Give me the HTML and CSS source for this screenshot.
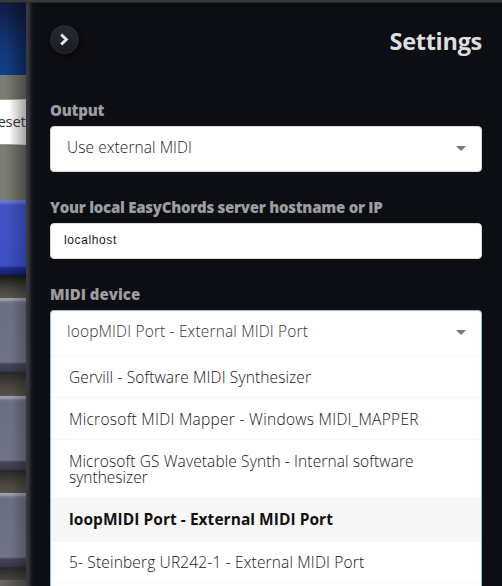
FILE: index.html
```
<!DOCTYPE html>
<html lang="en">
<head>
<meta charset="utf-8">
<title>Settings</title>
<link rel="stylesheet" href="styles.css">
</head>
<body>
<div class="topbar"></div>
<div class="shell">
  <aside class="board">
    <div class="banner"></div>
    <div class="preset"><span>eset</span></div>
    <div class="key active"></div>
    <div class="key"></div>
    <div class="key"></div>
    <div class="key last"></div>
    <div class="floor"></div>
  </aside>
  <main class="panel">
    <header class="head">
      <button class="close" aria-label="Close"><svg width="28" height="28" viewBox="0 0 28 28"><path d="M11.2 8.6 16.4 13.5 11.2 18.4" fill="none" stroke="#e6e6e8" stroke-width="2.9"/></svg></button>
      <h1>Settings</h1>
    </header>
    <label class="l-output">Output</label>
    <div class="select"><span class="t-use">Use external MIDI</span><i class="caret"></i></div>
    <label class="l-host">Your local EasyChords server hostname or IP</label>
    <div class="input">localhost</div>
    <label class="l-device">MIDI device</label>
    <div class="dropdown">
      <div class="current"><span class="t-cur">loopMIDI Port - External MIDI Port</span><i class="caret"></i></div>
      <div class="option"><span class="t-ger">Gervill - Software MIDI Synthesizer</span></div>
      <div class="option"><span class="t-map">Microsoft MIDI Mapper - Windows MIDI_MAPPER</span></div>
      <div class="option double"><span class="t-gs">Microsoft GS Wavetable Synth - Internal software</span> synthesizer</div>
      <div class="option selected"><span class="t-sel">loopMIDI Port - External MIDI Port</span></div>
      <div class="option after"><span class="t-ste">5- Steinberg UR242-1 - External MIDI Port</span></div>
    </div>
  </main>
</div>
</body>
</html>
```
FILE: styles.css
```
* { box-sizing: border-box; }
body { margin: 0; width: 502px; height: 586px; overflow: hidden; background: #0d0e13; font-family: "Open Sans", sans-serif; font-size: 15.5px; }
.topbar { height: 3px; background: linear-gradient(#37383c 66%, #25272a 66%); }
.shell { display: flex; height: 583px; }
.board { width: 26px; flex: none; overflow: hidden; background: linear-gradient(90deg, transparent 20%, rgba(0,0,0,.38)), #7d7c75; }
.banner { height: 72px; background: linear-gradient(90deg, transparent 20%, rgba(2,8,25,.5)), linear-gradient(#131b43, #123b7c 70%, #124287); }
.preset { height: 46px; margin: 24px 0 55px; line-height: 42px; font-size: 15px; letter-spacing: -.3px; color: #333; font-weight: 400; border: 1px solid #99979a; border-width: 1px 0; background: linear-gradient(90deg, #fff 35%, #a4a4a4); white-space: nowrap; }
.preset span { margin-left: -2.5px; }
.key { height: 98px; background: linear-gradient(90deg, transparent 40%, rgba(0,0,0,.25)), linear-gradient(#9b9db2 0 2px, #74778b 4px, #6c6f83 7px, #717489 64px, #454757 66px, #383b4a 73px, #242733 75px, #302f2b 77px, #484640 88px, #55534b 98px); }
.key + .key + .key { height: 97px; }
.key.active { background: linear-gradient(90deg, transparent 30%, rgba(0,0,30,.25)), linear-gradient(#6979d0 0 2px, #4254c3 5px, #3e50c5 64px, #3a4cc8 66px, #202e89 68px, #172264 74px, #191914 76px, #44433b 88px, #58574e 98px); }
.key + .key + .key.last { height: 87px; }
.floor { height: 6px; background: linear-gradient(90deg, #696862, #42413d); }
.panel { flex: 1; min-width: 0; height: 583px; overflow: hidden; padding: 22px 20px 0 24px; background: linear-gradient(90deg, #3b3d41 0, #303236 3px, #121318 6px, #0d0e13 10px); }
.head { display: flex; justify-content: space-between; height: 72px; align-items: flex-start; }
.close { width: 29px; height: 29px; padding: 0; border: 1px solid #2b2d37; border-radius: 50%; background: linear-gradient(#272932, #1b1d26); box-shadow: 2px 3px 5px #08090c; }
.close svg { display: block; margin: -1px; }
h1 { margin: 0; font-size: 23.5px; line-height: 32px; color: #dededf; font-weight: 700; letter-spacing: -.3px; }
label { display: block; height: 28px; line-height: 26px; font-size: 15px; color: #9c9d9f; font-weight: 800; white-space: nowrap; }
.l-output { height: 29px; letter-spacing: -.2px; }
.l-host { letter-spacing: -.26px; }
.l-host, .l-device { position: relative; top: -1px; }
.select, .input { background: #fff; border: 1px solid #d8dadd; border-radius: 4px; }
.select { display: flex; justify-content: space-between; height: 46px; padding: 0 15px 2px 16px; align-items: center; margin-bottom: 23px; color: #222; font-weight: 340; }
.select span, .current span { margin-top: -2px; }
.caret { width: 0; height: 0; border: solid transparent; border-width: 5px 5px 0; border-top-color: #777; }
.input { height: 36px; padding-left: 13px; font: 12px/33px "Liberation Sans", sans-serif; letter-spacing: .62px; color: #222; margin-bottom: 23px; }
.dropdown { height: 276px; overflow: hidden; background: #fff; border: 1px solid #85bfd2; border-bottom: 0; border-radius: 4px 4px 0 0; color: #151515; font-weight: 340; }
.current { display: flex; justify-content: space-between; align-items: center; height: 44px; padding: 0 15px 2px 16px; color: #333; }
.option { height: 42px; border-top: 1px solid #f7f7f7; padding: 13px 18px 0; line-height: 16px; }
.option.double { height: 58px; padding-right: 60px; }
.option.selected { height: 44px; background: #f7f7f7; font-weight: 700; color: #111; }
.option.after { border-bottom: 1px solid #f7f7f7; padding-top: 12px; }
.t-use { letter-spacing: .07px; }
.t-cur { letter-spacing: .15px; }
.t-ger { letter-spacing: .12px; }
.t-map { letter-spacing: .28px; }
.t-gs { letter-spacing: .11px; }
.t-sel { letter-spacing: .04px; }
.t-ste { letter-spacing: .16px; }
```
